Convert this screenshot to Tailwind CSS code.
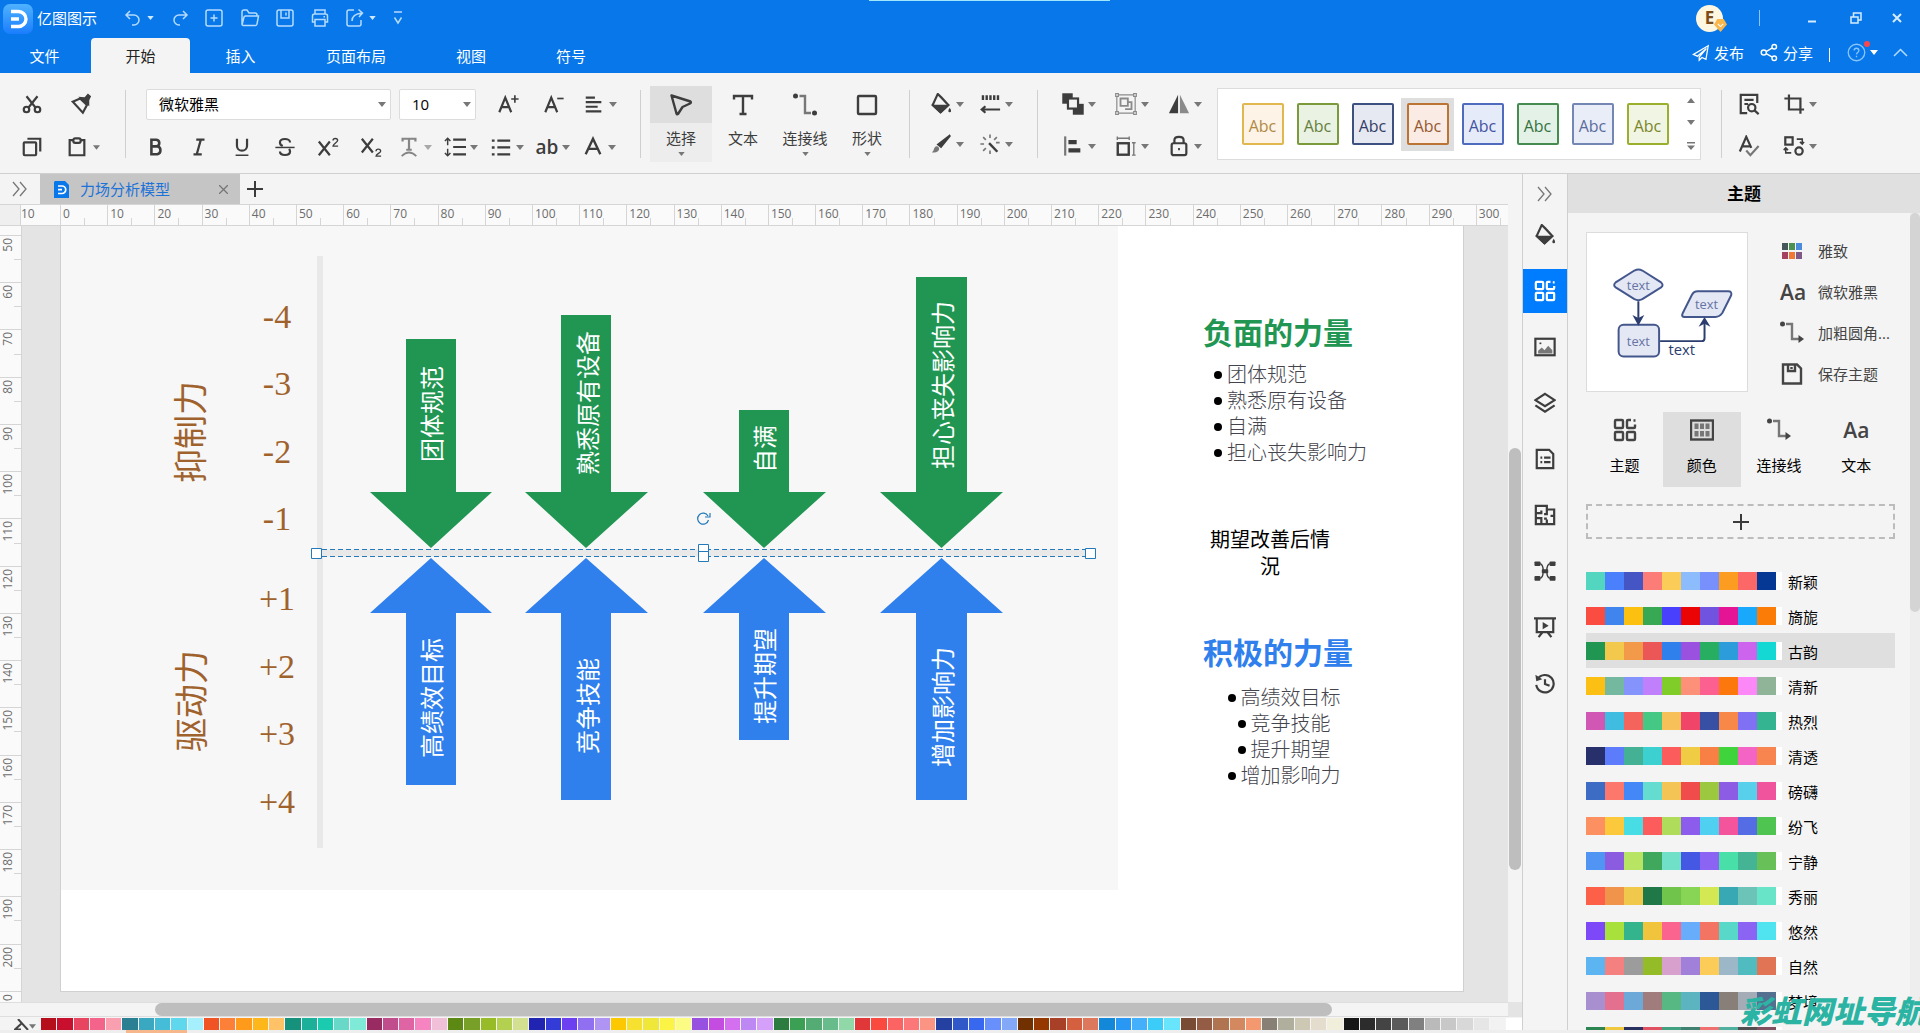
<!DOCTYPE html>
<html lang="zh-CN">
<head>
<meta charset="utf-8">
<title>亿图图示</title>
<script src="https://cdn.jsdelivr.net/npm/@tailwindcss/browser@4"></script>
</head>
<body class="h-screen overflow-hidden flex flex-col bg-[#f4f4f4] text-[15px] leading-5 text-[#222] font-['Open_Sans','Noto_Sans_CJK_SC',sans-serif]">

<svg class="hidden" aria-hidden="true">
  <defs>
    <symbol id="caret" viewBox="0 0 8 5"><path d="M0 0h8L4 5z" fill="currentColor"/></symbol>
    <symbol id="caret-up" viewBox="0 0 8 5"><path d="M0 5h8L4 0z" fill="currentColor"/></symbol>
    <symbol id="chevrons" viewBox="0 0 18 18"><path d="M2 2l6 7-6 7M9 2l6 7-6 7" fill="none" stroke="#777" stroke-width="1.3"/></symbol>
    <symbol id="plus" viewBox="0 0 18 18"><path d="M9 1v16M1 9h16" fill="none" stroke="#3b3b3b" stroke-width="2"/></symbol>
    <!-- title bar -->
    <symbol id="undo" viewBox="0 0 20 20"><path d="M7 3L3 7l4 4M3 7h8a5 5 0 0 1 0 10H9" /></symbol>
    <symbol id="redo" viewBox="0 0 20 20"><path d="M13 3l4 4-4 4M17 7H9a5 5 0 0 0 0 10h1" /></symbol>
    <symbol id="new" viewBox="0 0 20 20"><rect x="2" y="2" width="16" height="16" rx="2"/><path d="M10 6.500v7M6.500 10h7"/></symbol>
    <symbol id="open" viewBox="0 0 20 20"><path d="M2 16V4q0-2 2-2h3l2 3h6q2 0 2 2v1M2 17L4 9q.3-1 1.300-1H18.500L17 16q-.2 1.500-1.500 1.500H3q-1 0-1-1z"/></symbol>
    <symbol id="save" viewBox="0 0 20 20"><rect x="2" y="2" width="16" height="16" rx="2"/><path d="M6 2v8h8V2M11 4.500v3"/></symbol>
    <symbol id="print" viewBox="0 0 20 20"><path d="M5 6V2h10v4M5 14H2.500V8q0-2 2-2h11q2 0 2 2v6H15M5 11.500h10V18H5zM13.500 8.700h1.500"/></symbol>
    <symbol id="export" viewBox="0 0 20 20"><path d="M9 2H4Q2 2 2 4v12q0 2 2 2h10q2 0 2-2v-4M7 13q0-7 10-8M13.500 1.500L17.500 5l-3.500 4"/></symbol>
    <symbol id="plane" viewBox="0 0 20 20"><path d="M18 2L1.500 11.500l4.500 2L16 5 8 14.500V18l3-3 4.500 2z"/></symbol>
    <symbol id="share" viewBox="0 0 20 20"><circle cx="4" cy="10" r="2.700"/><circle cx="15" cy="4" r="2.400"/><circle cx="15" cy="16" r="2.400"/><path d="M6.500 9L13 5.200M6.500 11.300L13 14.800"/></symbol>
    <!-- clipboard -->
    <symbol id="cut" viewBox="0 0 24 24"><circle cx="6" cy="18" r="3"/><circle cx="18" cy="18" r="3"/><path d="M6 3.500l9.800 12.300M18 3.500L8.200 15.800"/></symbol>
    <symbol id="brush" viewBox="0 0 24 24"><path d="M3 9.500L11 6l7.500 7L14 21.500z"/><path d="M9 4l12 10.500V8L23 3.500 19.500.5 16 4.500z" fill="currentColor" stroke="none"/></symbol>
    <symbol id="copy" viewBox="0 0 24 24"><rect x="3" y="7" width="13.500" height="14" rx="1"/><path d="M7 3h14v14" /></symbol>
    <symbol id="paste" viewBox="0 0 24 24"><path d="M8 4.500H4V21h16V4.500h-4"/><rect x="8" y="2.500" width="8" height="5" rx="2"/></symbol>
    <!-- text formatting -->
    <symbol id="fontup" viewBox="0 0 24 24"><path d="M2.500 21L9 5l6.500 16M5 15.500h8"/><path d="M19.500 2.500v8M15.500 6.500h8" stroke-width="1.800"/></symbol>
    <symbol id="fontdown" viewBox="0 0 24 24"><path d="M2.500 21L9 5l6.500 16M5 15.500h8"/><path d="M15.500 6h7" stroke-width="1.800"/></symbol>
    <symbol id="alignl" viewBox="0 0 24 24"><path d="M3 5h10M3 10h17M3 15h13M3 20h17"/></symbol>
    <symbol id="bold" viewBox="0 0 24 24"><path d="M7 4v16h6.500a4.500 4.500 0 0 0 0-8.700H7h5.500a3.700 3.700 0 0 0 0-7.300z" stroke-width="2.800"/></symbol>
    <symbol id="italic" viewBox="0 0 24 24"><path d="M9 4h9M6 20h9M14 4l-4.500 16"/></symbol>
    <symbol id="underline" viewBox="0 0 24 24"><path d="M6.500 3v7.500a5.500 5.500 0 0 0 11 0V3"/><path d="M5 21h14" stroke-width="1.600"/></symbol>
    <symbol id="strike" viewBox="0 0 24 24"><path d="M17.500 7c0-5-11-5-11 0 0 2 1 3 3 4M6.500 17c0 5 11 5 11 0 0-1-.3-2-1-3"/><path d="M1.500 12.500h21" stroke-width="1.600"/></symbol>
    <symbol id="sup" viewBox="0 0 24 24"><path d="M2 6l12 15M14 6L2 21"/><path d="M17.500 5c0-3 5-3 5 0 0 2-5 3.500-5 6H23" stroke-width="1.500"/></symbol>
    <symbol id="sub" viewBox="0 0 24 24"><path d="M2 3l12 15M14 3L2 18"/><path d="M17.500 16.500c0-3 5-3 5 0 0 2-5 3-5 5.500H23" stroke-width="1.500"/></symbol>
    <symbol id="textpath" viewBox="0 0 24 24"><path d="M5 6V3h14v3M12 3v12M9 15h6" /><path d="M4 22q8-8 16 0" stroke-width="1.800"/></symbol>
    <symbol id="linesp" viewBox="0 0 24 24"><path d="M10 4h14M10 12h14M10 20h14"/><path d="M4 10V3M1 5.500l3-3 3 3M4 14v7M1 18.500l3 3 3-3" stroke-width="1.600"/></symbol>
    <symbol id="bullets" viewBox="0 0 24 24"><path d="M8 5h14M8 12.500h14M8 20h14"/><path d="M2 5h3M2 12.500h3M2 20h3" stroke-width="2.600"/></symbol>
    <symbol id="fontcolor" viewBox="0 0 24 24"><path d="M4 20L12 3l8 17M7 14h10" stroke-width="2.600"/></symbol>
    <!-- tools -->
    <symbol id="pointer" viewBox="0 0 24 24"><path d="M2.500 2.500L21.500 8.500q1 1-.5 2l-7.500 3.500-4.500 7q-1 1-1.500-.5z" stroke-linejoin="round"/></symbol>
    <symbol id="text" viewBox="0 0 24 24"><path d="M3 6.500V3h18v3.500M12 3v18M8.500 21h7" /></symbol>
    <symbol id="connector" viewBox="0 0 24 24"><circle cx="2.500" cy="3" r="2.500" fill="currentColor" stroke="none"/><path d="M6.500 3H12v17h6" stroke="#777"/><circle cx="21.500" cy="20" r="2.500" fill="currentColor" stroke="none"/></symbol>
    <symbol id="connarrow" viewBox="0 0 24 24"><circle cx="2.500" cy="3" r="2.500" fill="#444" stroke="none"/><path d="M6 3h6v15h7" stroke="#777"/><path d="M18.500 14l5.500 4-5.500 4z" fill="#444" stroke="none"/></symbol>
    <symbol id="square" viewBox="0 0 24 24"><rect x="3" y="3" width="18" height="18" rx="1" stroke-width="2.400"/></symbol>
    <symbol id="fill" viewBox="0 0 24 24"><path d="M8.500 1L12 4.500l8 8.500-8.500 8L3 13z" stroke-linejoin="round"/><path d="M4 14h15l-7.500 7z" fill="currentColor"/><path d="M21.500 16q3 4.500 0 5-3-.5 0-5z" fill="currentColor" stroke="none"/></symbol>
    <symbol id="linestyle" viewBox="0 0 24 24"><path d="M3 5h20" stroke-width="5" stroke-dasharray="2.600 1.500"/><path d="M3 18h20M7 14.500L3 18l4 3.500"/></symbol>
    <symbol id="pen" viewBox="0 0 24 24"><path d="M22 2.500L12 15l-3-2.500z" fill="currentColor"/><path d="M8 14.500q3.500 2 1 5Q6 22 2 21q2-1 2.500-4 1-3 3.500-2.500z" fill="#777" stroke="none"/></symbol>
    <symbol id="sparkle" viewBox="0 0 24 24"><path d="M12 1.500v4M12 19v4M1.500 12h4M18.500 10.500h4M4.500 4.500l3 3M19.500 4.500l-3 3M4.500 19.500l3-3" stroke="#777" stroke-width="1.800"/><path d="M11 11l9 9.500" stroke-width="2.600"/></symbol>
    <symbol id="front" viewBox="0 0 24 24"><rect x="1.500" y="1.500" width="9" height="9" fill="currentColor"/><rect x="13" y="13" width="9.500" height="9.500" fill="currentColor"/><rect x="6.500" y="6" width="11" height="11" fill="#f4f4f4"/></symbol>
    <symbol id="group" viewBox="0 0 24 24"><g stroke="#8a8a8a"><path d="M2 2h20v20H2z" stroke-width="1.300"/><path d="M6 6h8v8H6zM11 17.500h7V10h-3" stroke-width="2"/><g fill="#f4f4f4" stroke-width="1.200"><path d="M.7.7h3v3h-3zM20.300.7h3v3h-3zM.7 20.300h3v3h-3zM20.300 20.300h3v3h-3z"/></g></g></symbol>
    <symbol id="flip" viewBox="0 0 24 24"><path d="M11 2v20H1z" fill="currentColor" stroke="none"/><path d="M13 2v20h10z" fill="#8a8a8a" stroke="none"/></symbol>
    <symbol id="align" viewBox="0 0 24 24"><path d="M3.500 1.500v21" stroke="#777"/><path d="M7 5.500h9V10H7zM7 14.500h13V19H7z" fill="currentColor" stroke="none"/></symbol>
    <symbol id="size" viewBox="0 0 24 24"><rect x="3" y="9" width="12" height="12.500" stroke-width="2.600"/><path d="M2.500 1.500v4M15.500 1.500v4M2.500 3.500h13M18.500 8.500h4M18.500 22h4M20.500 8.500V22" stroke="#777" stroke-width="1.500"/></symbol>
    <symbol id="lock" viewBox="0 0 24 24"><rect x="4" y="9" width="16" height="13" rx="2"/><path d="M7 9V5.500Q7 2 12 2t5 3.500V9M11 15.500h2"/></symbol>
    <symbol id="find" viewBox="0 0 24 24"><path d="M10 22H3V2h18v9M7 7.500h10M7 12h4"/><circle cx="15" cy="16" r="4"/><path d="M18 19l4.500 4"/></symbol>
    <symbol id="crop" viewBox="0 0 24 24"><path d="M6.500 1.500V18H17M1.500 6H19v16.500M17 18h6"/></symbol>
    <symbol id="spell" viewBox="0 0 24 24"><path d="M2 18L9 2l5.500 12M4.500 12.500h9"/><path d="M9 17l4.500 5L22.500 12" stroke="#777"/></symbol>
    <symbol id="swap" viewBox="0 0 24 24"><rect x="2.500" y="2.500" width="8" height="8"/><circle cx="17.500" cy="17.500" r="4"/><path d="M15 4.500h6V9M18.500 7.500l2.500 2.500 2-2.500M9 19.500H3V15M.8 16.500L3 14l2.500 2.500" stroke-width="1.700"/></symbol>
    <!-- side rail -->
    <symbol id="theme" viewBox="0 0 24 24"><rect x="2" y="2" width="8" height="8" rx="1"/><rect x="2" y="14" width="8" height="8" rx="1"/><rect x="14" y="14" width="8" height="8" rx="1"/><path d="M18 2h-3q-1 0-1 1v6q0 1 1 1h6q1 0 1-1V6.500M20.500 2.500h2"/></symbol>
    <symbol id="image" viewBox="0 0 24 24"><rect x="1.500" y="3" width="21" height="18"/><path d="M4.500 19v-3l4-3.500 3 3 4-5 4.500 5V19z" fill="#777" stroke="none"/><path d="M6 8h2" stroke-width="1.800"/></symbol>
    <symbol id="layers" viewBox="0 0 24 24"><path d="M12 2l10.500 6.800L12 15.500 1.500 8.800zM1.500 14.500L12 21.500l10.500-7"/></symbol>
    <symbol id="doc" viewBox="0 0 24 24"><path d="M3 2h13.500L21 6.500V22H3z"/><path d="M7 10.500h2M11 10.500h7M7 15.500h2M11 15.500h7"/></symbol>
    <symbol id="puzzle" viewBox="0 0 24 24"><path d="M14 6V2H2v20h20V6h-8M2 10h6V7M2 15.500h6v6M14 22v-5M14 6v5h-3M14 16h-3M22 13h-4"/></symbol>
    <symbol id="mind" viewBox="0 0 24 24"><path d="M6 4q4 0 4 8t-4 8M18 4q-4 0-4 8t4 8" stroke-width="1.500"/><g fill="currentColor" stroke="none"><rect x=".5" y="1.500" width="6.500" height="5" rx="1"/><rect x="17" y="1.500" width="6.500" height="5" rx="1"/><rect x=".5" y="17.500" width="6.500" height="5" rx="1"/><rect x="17" y="17.500" width="6.500" height="5" rx="1"/><rect x="8.500" y="10" width="7" height="4.500" rx="1"/></g></symbol>
    <symbol id="board" viewBox="0 0 24 24"><path d="M0 2.500h24M3 2.500V17.500h18V2.500M9 18l-4 5M15 18l4 5"/><path d="M9.500 6.500l6.500 4-6.500 4z" fill="currentColor" stroke="none"/></symbol>
    <symbol id="history" viewBox="0 0 24 24"><path d="M4 7.500a9.500 9.500 0 1 1-1.500 6.500M12 8v5l5 2"/><path d="M1.500 3l1 7 6.500-2z" fill="currentColor" stroke="none"/></symbol>
    <symbol id="colors" viewBox="0 0 24 24"><rect x="1" y="2.500" width="22" height="19"/><path d="M4.500 5.500h4v5.500h-4zM10 5.500h4v5.500h-4zM15.500 5.500h4v5.500h-4zM4.500 13h4v5.500h-4zM10 13h4v5.500h-4zM15.500 13h4v5.500h-4z" fill="#777" stroke="none"/></symbol>
    <symbol id="disk" viewBox="0 0 24 24"><path d="M3 2.500h14L21 6.500V21.500H3z"/><path d="M8 2.500v6.500h7V2.500M11.500 5v2" /></symbol>
  </defs>
</svg>

<!-- Title bar and menu -->
<header class="relative flex h-[73px] shrink-0 flex-col bg-[#0877ea] text-white">
  <div class="absolute left-1/2 top-0 h-px w-[241px] -translate-x-[91px] bg-[#9fe6ff]"></div>
  <div class="flex h-9 items-center pl-[3px]">
    <svg class="mt-px size-[30px]" viewBox="0 0 30 30"><defs><linearGradient id="lg" x1="0" y1="0" x2="0" y2="1"><stop offset="0" stop-color="#4fb2ff"/><stop offset="1" stop-color="#1a7dff"/></linearGradient></defs><rect width="30" height="30" rx="7" fill="url(#lg)"/><path d="M8 7.500h7.500a7.500 7.500 0 0 1 0 15H8M8 15h8" fill="none" stroke="#fff" stroke-width="3.400"/></svg>
    <span class="ml-1">亿图图示</span>
    <div class="ml-[26px] flex items-center fill-none stroke-[#b4dcff] stroke-[1.5] text-[#cfe9ff]">
      <button aria-label="撤销" class="flex w-[47px] items-center gap-1"><svg class="size-5"><use href="#undo"/></svg><svg class="h-[4px] w-[7px] stroke-none"><use href="#caret"/></svg></button>
      <button aria-label="重做" class="w-[34px]"><svg class="size-5"><use href="#redo"/></svg></button>
      <button aria-label="新建" class="w-9"><svg class="size-5"><use href="#new"/></svg></button>
      <button aria-label="打开" class="w-[35px]"><svg class="size-5"><use href="#open"/></svg></button>
      <button aria-label="保存" class="w-[35px]"><svg class="size-5"><use href="#save"/></svg></button>
      <button aria-label="打印" class="w-[35px]"><svg class="size-5"><use href="#print"/></svg></button>
      <button aria-label="导出" class="flex w-[48px] items-center gap-1"><svg class="size-5"><use href="#export"/></svg><svg class="h-[4px] w-[7px] stroke-none"><use href="#caret"/></svg></button>
      <button aria-label="自定义"><svg class="h-4 w-[10px]" viewBox="0 0 10 16"><path d="M1 2h8M1.500 7.500L5 13l3.500-5.500"/></svg></button>
    </div>
    <div class="ml-auto flex items-center">
      <button aria-label="账户" class="relative grid size-[27px] place-items-center rounded-full bg-[#fdf6e0] text-[17px] font-bold text-[#7a4a1a]">E<svg class="absolute -right-1 bottom-0 size-[13px]" viewBox="0 0 12 12"><path d="M3 0h6l3 5-6 7-6-7z" fill="#f8b64c"/><path d="M3.500 4.500L6 7l2.500-2.500" fill="none" stroke="#fff"/></svg></button>
      <span class="ml-9 h-4 w-px bg-[#8cc4ff]"></span>
      <button aria-label="最小化" class="ml-12 w-[42px]"><svg class="h-4 w-2" viewBox="0 0 8 16"><path d="M0 11.500h8" stroke="#d5ecff" stroke-width="2"/></svg></button>
      <button aria-label="还原" class="w-[42px]"><svg class="size-3" viewBox="0 0 12 12" fill="none" stroke="#d5ecff" stroke-width="1.500"><path d="M1 5h7v6H1zM3.500 5V1H11v7H8"/></svg></button>
      <button aria-label="关闭" class="mr-[18px]"><svg class="size-[10px]" viewBox="0 0 10 10" stroke="#d5ecff" stroke-width="2"><path d="M1 1l8 8M9 1L1 9"/></svg></button>
    </div>
  </div>
  <nav class="flex flex-1 pt-0.5">
    <a href="#file" class="grid w-[91px] place-items-center pr-0.5">文件</a>
    <a href="#home" class="grid w-[99px] place-items-center rounded-t-sm bg-[#f4f4f4] text-[#222]">开始</a>
    <a href="#insert" class="grid w-[101px] place-items-center">插入</a>
    <a href="#layout" class="grid w-[130px] place-items-center">页面布局</a>
    <a href="#view" class="grid w-[100px] place-items-center">视图</a>
    <a href="#symbol" class="grid w-[100px] place-items-center">符号</a>
    <div class="mb-1.5 ml-auto mr-3 flex items-center">
      <button class="flex items-center gap-1"><svg class="size-[18px] fill-none stroke-white stroke-[1.4]"><use href="#plane" width="18" height="18"/></svg>发布</button>
      <button class="ml-4 flex items-center gap-1"><svg class="size-[19px] fill-none stroke-white stroke-[1.5]"><use href="#share" width="19" height="19"/></svg>分享</button>
      <span class="ml-4 mt-1 h-[14px] w-px bg-white"></span>
      <button aria-label="帮助" class="relative ml-[17px] flex items-center gap-1"><svg class="size-[19px] fill-none stroke-[#86c5ff] stroke-[1.4]" viewBox="0 0 20 20"><circle cx="10" cy="10" r="8.700"/><path d="M7.500 8q0-2.500 2.500-2.500T12.500 8q0 1.200-1.200 2T10 12M10 13.500v1.500"/></svg><svg class="h-[5px] w-[8px]"><use href="#caret"/></svg><span class="absolute left-[17px] -top-0.5 size-[6px] rounded-full bg-[#f8474d]"></span></button>
      <button aria-label="折叠" class="ml-[15px]"><svg class="h-[9px] w-[15px] fill-none stroke-[#b4dcff] stroke-[1.5]" viewBox="0 0 15 9"><path d="M1 8l6.500-6.500L14 8"/></svg></button>
    </div>
  </nav>
</header>

<!-- Ribbon -->
<section class="flex h-[101px] shrink-0 items-start border-b border-[#cfcfcf] pl-[10px] pt-[15px] text-[#3d3d3d]">
  <div class="grid w-[115px] grid-cols-[44px_71px] gap-y-[11px] fill-none stroke-current stroke-[2.4]">
    <button aria-label="剪切" class="grid h-8 place-items-center"><svg class="size-[22px]"><use href="#cut"/></svg></button>
    <button aria-label="格式刷" class="flex h-8 items-center pl-4"><svg class="size-[22px]"><use href="#brush"/></svg></button>
    <button aria-label="复制" class="grid h-8 place-items-center"><svg class="size-[22px]"><use href="#copy"/></svg></button>
    <button aria-label="粘贴" class="flex h-8 items-center gap-[5px] pl-3"><svg class="size-[22px]"><use href="#paste"/></svg><svg class="h-[5px] w-[7px] stroke-none text-[#777]"><use href="#caret"/></svg></button>
  </div>
  <div class="mt-0.5 h-[68px] w-px bg-[#cfcfcf]"></div>
  <div class="ml-2 w-[489px] space-y-[11px]">
    <div class="flex h-8 items-center pl-3">
      <div class="relative h-[31px] w-[245px]">
        <select aria-label="字体" class="h-full w-full appearance-none rounded-xs border border-[#dcdcdc] bg-white pl-3 text-[15px] text-black"><option>微软雅黑</option></select>
        <svg class="pointer-events-none absolute right-[5px] top-[13px] h-[5px] w-[8px] text-[#777]"><use href="#caret"/></svg>
      </div>
      <div class="relative ml-2 h-[31px] w-[77px]">
        <select aria-label="字号" class="h-full w-full appearance-none rounded-xs border border-[#dcdcdc] bg-white pl-3 text-[15px] text-black"><option>10</option></select>
        <svg class="pointer-events-none absolute right-[5px] top-[13px] h-[5px] w-[8px] text-[#777]"><use href="#caret"/></svg>
      </div>
      <div id="fontRow1" class="ml-[9px] flex"></div>
    </div>
    <div id="fontRow2" class="flex h-8 items-center"></div>
  </div>
  <div class="ml-[17px] mt-0.5 h-[68px] w-px bg-[#cfcfcf]"></div>
  <div class="-mt-0.5 ml-[9px] flex text-[15px]">
    <button class="flex h-[76px] w-[62px] flex-col items-center bg-[#ededed]"><span class="grid h-[37px] w-full place-items-center bg-[#dedede]"><svg class="size-6 fill-none stroke-current stroke-[2.4]"><use href="#pointer"/></svg></span><span class="mt-[5px]">选择</span><svg class="mt-1 h-[4px] w-[7px] text-[#777]"><use href="#caret"/></svg></button>
    <button class="flex h-[76px] w-[62px] flex-col items-center"><span class="grid h-[37px] place-items-center"><svg class="size-6 fill-none stroke-current stroke-[2.4]"><use href="#text"/></svg></span><span class="mt-[5px]">文本</span></button>
    <button class="flex h-[76px] w-[62px] flex-col items-center"><span class="grid h-[37px] place-items-center"><svg class="size-6 fill-none stroke-current stroke-[2.4]"><use href="#connector"/></svg></span><span class="mt-[5px]">连接线</span><svg class="mt-1 h-[4px] w-[7px] text-[#777]"><use href="#caret"/></svg></button>
    <button class="flex h-[76px] w-[62px] flex-col items-center"><span class="grid h-[37px] place-items-center"><svg class="size-6 fill-none stroke-current stroke-[2.4]"><use href="#square"/></svg></span><span class="mt-[5px]">形状</span><svg class="mt-1 h-[4px] w-[7px] text-[#777]"><use href="#caret"/></svg></button>
  </div>
  <div class="ml-[11px] mt-0.5 h-[68px] w-px bg-[#cfcfcf]"></div>
  <div id="styleGroup" class="ml-3 grid grid-cols-[49px_49px] gap-y-2"></div>
  <div class="ml-[17px] mt-0.5 h-[68px] w-px bg-[#cfcfcf]"></div>
  <div id="arrangeGroup" class="ml-[14px] grid grid-cols-[53px_53px_53px] gap-y-[10px]"></div>
  <div class="ml-1.5 flex h-[72px] w-[484px] items-center border border-[#dcdcdc] bg-white pl-[18px]">
    <div id="gallery" class="flex gap-0.5"></div>
    <div class="ml-auto mr-[5px] flex h-full flex-col items-center justify-between py-[9px] text-[#777]">
      <svg class="h-[5px] w-[8px]"><use href="#caret-up"/></svg><svg class="h-[5px] w-[8px]"><use href="#caret"/></svg>
      <svg class="h-[8px] w-[8px]" viewBox="0 0 8 8"><path d="M0 0h8v1.500H0zM0 3.500h8L4 8z" fill="currentColor"/></svg>
    </div>
  </div>
  <div class="ml-5 mt-0.5 h-[68px] w-px bg-[#cfcfcf]"></div>
  <div id="editGroup" class="ml-0.5 grid grid-cols-[50px_52px] gap-y-[10px]"></div>
</section>

<!-- Workspace -->
<div class="flex min-h-0 flex-1">
  <main class="flex min-w-0 flex-1 flex-col">
    <div class="flex h-[30px] shrink-0 items-stretch">
      <button aria-label="展开" class="w-10 pl-[11px]"><svg class="size-[18px]"><use href="#chevrons"/></svg></button>
      <div class="flex w-[200px] items-center bg-[#c5c5c5] pl-[14px] pr-3 text-[#1d72d8]">
        <svg class="h-[17px] w-[15px]" viewBox="0 0 15 17"><path d="M1 0h10l4 4v13H0V1z" fill="#0877ea"/><path d="M4 5h4a3.500 3.500 0 0 1 0 7.500H4M4 8.700h4" fill="none" stroke="#fff" stroke-width="1.700"/></svg>
        <span class="ml-[11px]">力场分析模型</span>
        <button aria-label="关闭标签" class="ml-auto"><svg class="size-[9px]" viewBox="0 0 9 9" stroke="#777" stroke-width="1.300"><path d="M0 0l9 9M9 0L0 9"/></svg></button>
      </div>
      <button aria-label="新建标签" class="pl-1.5"><svg class="size-[18px]"><use href="#plus"/></svg></button>
    </div>
    <div class="flex min-h-0 flex-1">
      <div class="flex min-w-0 flex-1 flex-col">
        <!-- horizontal ruler -->
        <div class="flex h-[22px] shrink-0 overflow-hidden border-y border-[#d5d5d5] bg-[#fafafa] text-[12px] leading-[17px] text-[#6d6d6d]">
          <div class="w-[21px] shrink-0 border-r border-[#d5d5d5] bg-[#efefef]"></div>
          <div class="w-[39px] shrink-0">10</div>
          <div id="rulerX" class="grid w-[1463px] shrink-0 grid-cols-31"></div>
        </div>
        <div class="flex min-h-0 flex-1">
          <!-- vertical ruler -->
          <div class="w-[22px] shrink-0 overflow-hidden border-r border-[#d5d5d5] bg-[#fafafa] pt-[9px] text-[12px] leading-[16px] text-[#6d6d6d]">
            <div id="rulerY" class="grid h-[803px] grid-rows-17"></div>
          </div>
          <!-- canvas -->
          <div class="relative min-w-0 flex-1 overflow-hidden bg-[#e4e4e4]">
            <div class="absolute left-[38px] top-0 h-[766px] w-[1404px] border border-t-0 border-[#d0d0d0] bg-white">
              <div class="h-[664px] w-[1057px] bg-[#f7f7f7]"></div>
            </div>
            <svg class="absolute left-0 top-0" width="1120" height="664" viewBox="22 226 1120 664">
              <path d="M320 256v592" stroke="#e9e9e9" stroke-width="6"/>
              <path d="M316 553h774" stroke="#e9e9e9" stroke-width="7"/>
              <g fill="#219653">
                <path d="M406 339h50v153h36l-61 56-61-56h36z"/><path d="M561 315h50v177h37l-62 56-61-56h36z"/>
                <path d="M739 410h50v82h37l-62 56-61-56h36z"/><path d="M916 277h51v215h36l-61.500 56-61.500-56h36z"/>
              </g>
              <g fill="#2f80ed">
                <path d="M406 785h50V613h36l-61-55-61 55h36z"/><path d="M561 800h50V613h37l-62-55-61 55h36z"/>
                <path d="M739 740h50V613h37l-62-55-61 55h36z"/><path d="M916 800h51V613h36l-61.500-55-61.500 55h36z"/>
              </g>
              <g fill="#fff" font-size="24" text-anchor="middle">
                <text transform="translate(441 414) rotate(-90)">团体规范</text><text transform="translate(597 403) rotate(-90)">熟悉原有设备</text>
                <text transform="translate(774 449) rotate(-90)">自满</text><text transform="translate(952 385) rotate(-90)">担心丧失影响力</text>
                <text transform="translate(441 698) rotate(-90)">高绩效目标</text><text transform="translate(597 706) rotate(-90)">竞争技能</text>
                <text transform="translate(774 676) rotate(-90)">提升期望</text><text transform="translate(952 707) rotate(-90)">增加影响力</text>
              </g>
              <g fill="#a0622d" font-size="34" text-anchor="middle">
                <text transform="translate(203 432) rotate(-90)">抑制力</text><text transform="translate(204 701) rotate(-90)">驱动力</text>
                <g font-family="Liberation Serif, serif">
                  <text x="277" y="328">-4</text><text x="277" y="395">-3</text><text x="277" y="463">-2</text><text x="277" y="530">-1</text>
                  <text x="277" y="610">+1</text><text x="277" y="678">+2</text><text x="277" y="745">+3</text><text x="277" y="813">+4</text>
                </g>
              </g>
              <g fill="none" stroke="#2479b8">
                <path d="M322 549.500h763M322 556.500h763" stroke-dasharray="5 3" stroke-width="1.200"/>
                <g fill="#fff"><path d="M311.500 548.500h10v10h-10zM1085.500 548.500h10v10h-10zM698.500 544.500h10v7h-10zM698.500 551.500h10v10h-10z"/></g>
                <path d="M708 516a5.500 5.500 0 1 0 .5 4M705 517h5v-4" stroke-width="1.200"/>
              </g>
            </svg>
            <section class="absolute left-[1181px] top-[87px]">
              <h2 class="text-[30px] font-bold leading-10 text-[#219653]">负面的力量</h2>
              <ul class="mt-[9px] pl-[11px] text-[20px] font-light leading-[26px] text-[#44444c]">
                <li class="flex items-center gap-[5px]"><i class="size-2 rounded-full bg-black"></i>团体规范</li>
                <li class="flex items-center gap-[5px]"><i class="size-2 rounded-full bg-black"></i>熟悉原有设备</li>
                <li class="flex items-center gap-[5px]"><i class="size-2 rounded-full bg-black"></i>自满</li>
                <li class="flex items-center gap-[5px]"><i class="size-2 rounded-full bg-black"></i>担心丧失影响力</li>
              </ul>
            </section>
            <p class="absolute left-[1183px] top-[300px] w-[130px] text-center text-[20px] leading-[27px] text-black">期望改善后情況</p>
            <section class="absolute left-[1181px] top-[407px]">
              <h2 class="text-[30px] font-bold leading-10 text-[#2f80ed]">积极的力量</h2>
              <ul class="mt-3 w-[162px] text-[20px] font-light leading-[26px] text-[#44444c]">
                <li class="flex items-center justify-center gap-[5px]"><i class="size-2 rounded-full bg-black"></i>高绩效目标</li>
                <li class="flex items-center justify-center gap-[5px]"><i class="size-2 rounded-full bg-black"></i>竞争技能</li>
                <li class="flex items-center justify-center gap-[5px]"><i class="size-2 rounded-full bg-black"></i>提升期望</li>
                <li class="flex items-center justify-center gap-[5px]"><i class="size-2 rounded-full bg-black"></i>增加影响力</li>
              </ul>
            </section>
          </div>
        </div>
        <div class="h-[15px] shrink-0 border-y border-[#dedede] pl-[155px]"><div class="h-[13px] w-[87%] rounded-full bg-[#bebebe]"></div></div>
      </div>
      <!-- vertical scrollbar -->
      <div class="flex w-[14px] flex-col pt-[244px]"><div class="mx-px h-[422px] rounded-full bg-[#bebebe]"></div><div class="mt-auto h-[15px] bg-[#e4e4e4]"></div></div>
    </div>
    <!-- palette bar -->
    <div class="flex h-[13px] shrink-0 items-start pt-px">
      <button aria-label="填充颜色" class="flex w-[41px] items-center justify-end pr-[5px] pt-px text-[#777]"><svg class="h-[11px] w-[15px]" viewBox="0 0 15 11"><path d="M4 0l10 11M8 4L1 10.500h6" fill="none" stroke="#444" stroke-width="2"/></svg><svg class="mt-1 h-[5px] w-[7px]"><use href="#caret"/></svg></button>
      <div id="palette" class="flex h-3 flex-1 gap-px"></div>
    </div>
  </main>

  <!-- Side rail -->
  <aside class="flex w-[46px] shrink-0 flex-col items-stretch border-x border-[#cfcfcf] text-[#3d3d3d]">
    <button aria-label="收起" class="grid h-[39px] place-items-center"><svg class="size-[18px]"><use href="#chevrons"/></svg></button>
    <div id="rail" class="flex flex-col gap-3"></div>
  </aside>

  <!-- Theme panel -->
  <aside class="flex w-[352px] shrink-0 flex-col">
    <h2 class="grid h-[39px] shrink-0 place-items-center bg-[#e0e0e0] text-[17px] font-bold text-black">主题</h2>
    <div class="flex min-h-0 flex-1">
      <div class="flex min-w-0 flex-1 flex-col overflow-hidden pl-[18px] pr-[15px] pt-[19px]">
        <div class="flex shrink-0">
          <svg class="h-[160px] w-[162px] shrink-0 border border-[#dcdcdc] bg-white" viewBox="0 0 162 160">
            <g fill="#e4e7f4" stroke="#44578c" stroke-width="2" stroke-linejoin="round">
              <path d="M48 38q4-2 8 0l19 12q3 3 0 5L56 67q-4 2-8 0L29 55q-3-2 0-5z"/>
              <rect x="32" y="93" width="41" height="32" rx="5"/>
              <path d="M112 59h31q4 0 3 4l-9 18q-3 4-7 4H99q-4 0-2-4l9-18q2-4 6-4z"/>
            </g>
            <path d="M52 69v22M74 109.500h42q3 0 3-3V88" fill="none" stroke="#2c3e70" stroke-width="2"/>
            <path d="M46 83l6 3 6-3-6 11zM113 95l6-3 6 3-6-10z" fill="#2c3e70"/>
            <g font-size="13" fill="#6474a4" text-anchor="middle"><text x="52" y="58">text</text><text x="52" y="114">text</text><text x="121" y="77">text</text><text x="96" y="124" font-size="15" fill="#2c3e70">text</text></g>
          </svg>
          <ul class="-mt-0.5 ml-8 flex flex-col whitespace-nowrap text-[#444]">
            <li class="flex h-[41px] items-center gap-[14px]"><svg class="size-6" viewBox="0 0 24 24"><path fill="#46575c" d="M2 4h6v7H2z"/><path fill="#4d9151" d="M9 4h6v7H9z"/><path fill="#4a8cdb" d="M16 4h6v7h-6z"/><path fill="#a44060" d="M2 13h6v7H2z"/><path fill="#f07a35" d="M9 13h6v7H9z"/><path fill="#805a86" d="M16 13h6v7h-6z"/></svg>雅致</li>
            <li class="flex h-[41px] items-center gap-[14px]"><span class="w-6 text-[21px] font-semibold">Aa</span>微软雅黑</li>
            <li class="flex h-[41px] items-center gap-[14px]"><svg class="size-6 fill-none stroke-[2.4]"><use href="#connarrow"/></svg>加粗圆角...</li>
            <li class="flex h-[41px] items-center gap-[14px]"><svg class="size-6 fill-none stroke-[#444] stroke-[2.4]"><use href="#disk"/></svg>保存主题</li>
          </ul>
        </div>
        <div class="mt-[18px] grid shrink-0 grid-cols-4 text-black">
          <button class="flex h-[75px] flex-col items-center pt-1.5"><svg class="size-6 fill-none stroke-[#444] stroke-[2.4]"><use href="#theme"/></svg><span class="mt-[13px]">主题</span></button>
          <button class="flex h-[75px] flex-col items-center bg-[#dedede] pt-1.5"><svg class="size-6 fill-none stroke-[#444] stroke-[2.4]"><use href="#colors"/></svg><span class="mt-[13px]">颜色</span></button>
          <button class="flex h-[75px] flex-col items-center pt-1.5"><svg class="size-6 fill-none stroke-[2.4]"><use href="#connarrow"/></svg><span class="mt-[13px]">连接线</span></button>
          <button class="flex h-[75px] flex-col items-center pt-1.5"><span class="h-6 text-[21px] font-semibold leading-6 text-[#444]">Aa</span><span class="mt-[13px]">文本</span></button>
        </div>
        <button aria-label="新建颜色" class="mt-[17px] grid h-[35px] shrink-0 place-items-center border-2 border-dashed border-[#bcbcbc]"><svg class="size-[18px]"><use href="#plus"/></svg></button>
        <ul id="themes" class="mt-6 text-black"></ul>
      </div>
      <div class="w-[10px] bg-[#eee]"><div class="h-[399px] rounded-full bg-[#d4d4d4]"></div></div>
    </div>
  </aside>
</div>
<div class="h-[3px] shrink-0 bg-[#eee] pl-[126px]"><div class="h-full w-[61px] bg-[#f6b78d]"></div></div>
<div class="absolute bottom-0.5 right-0 w-[184px] overflow-hidden whitespace-nowrap pl-1 text-[31px] font-black italic leading-10 text-[#2bb3a3]">彩虹网址导航</div>

<script>
const $ = id => document.getElementById(id);
const caret = '<svg class="h-[5px] w-[8px] stroke-none text-[#777]"><use href="#caret"/></svg>';
const icon = id => `<svg class="size-[22px] fill-none stroke-current stroke-[2.4]"><use href="#${id}"/></svg>`;
const tool = (id, label, arrow, width) => `<button aria-label="${label}" class="${width} flex h-8 items-center justify-center gap-1">${id === 'ab' ? '<span class="text-[19px] font-semibold leading-6">ab</span>' : icon(id)}${arrow ? caret : ''}</button>`;
const fill = (id, list) => { $(id).innerHTML = list.map(t => tool(t[0], t[1], t[2], t[3])).join(''); };

fill('fontRow1', [['fontup','增大字号',0,'w-[46px]'],['fontdown','减小字号',0,'w-[46px]'],['alignl','对齐',1,'w-[46px]']]);
fill('fontRow2', [['bold','加粗',0,'w-[43px]'],['italic','斜体',0,'w-[43px]'],['underline','下划线',0,'w-[43px]'],['strike','删除线',0,'w-[43px]'],['sup','上标',0,'w-[43px]'],['sub','下标',0,'w-[43px]'],['textpath','文字路径',1,'w-[46px] opacity-60'],['linesp','行距',1,'w-[46px]'],['bullets','项目符号',1,'w-[46px]'],['ab','大小写',1,'w-[46px]'],['fontcolor','字体颜色',1,'w-[46px]']]);
fill('styleGroup', [['fill','填充',1,'w-full'],['linestyle','线条',1,'w-full'],['pen','画笔',1,'w-full'],['sparkle','效果',1,'w-full']]);
fill('arrangeGroup', [['front','置顶',1,'w-full'],['group','组合',1,'w-full'],['flip','翻转',1,'w-full'],['align','对齐形状',1,'w-full'],['size','大小',1,'w-full'],['lock','锁定',1,'w-full']]);
fill('editGroup', [['find','查找',0,'w-full'],['crop','裁剪',1,'w-full'],['spell','拼写检查',0,'w-full'],['swap','替换形状',1,'w-full']]);

$('gallery').innerHTML = [['#e0b84f','#fdf3e6','#b08a45'],['#7a9a3c','#eaf2e4','#64803a'],['#3d5080','#e6e9f1','#333c66'],['#bb7433','#faece5','#96582f'],['#4e6bbd','#e6ebf9','#4153a0'],['#468c50','#e3f1e6','#35713f'],['#7386b4','#e8edf8','#5a6c9c'],['#9caf2d','#f1f5e3','#7a8628']]
  .map((c, i) => `<button class="grid h-[53px] w-[53px] place-items-center ${i === 3 ? 'bg-[#dedede]' : ''}"><span class="grid size-[42px] place-items-center rounded-xs border-2 pt-1 text-[16px]" style="border-color:${c[0]};background:${c[1]};color:${c[2]}">Abc</span></button>`).join('');

$('rail').innerHTML = ['fill','theme','image','layers','doc','puzzle','mind','board','history']
  .map(id => `<button aria-label="${id}" class="grid h-11 place-items-center ${id === 'theme' ? 'bg-[#007cff] text-white' : ''}">${icon(id)}</button>`).join('');

$('rulerX').innerHTML = Array.from({length: 31}, (_, i) => `<div class="relative border-l border-[#d5d5d5] pl-0.5">${i * 10}<i class="absolute bottom-0 left-1/2 h-[7px] w-px bg-[#d5d5d5]"></i></div>`).join('');
$('rulerY').innerHTML = Array.from({length: 17}, (_, i) => `<div class="relative border-t border-[#d5d5d5] pt-0.5"><span class="block rotate-180 [writing-mode:vertical-rl]">${i === 16 ? 0 : 50 + i * 10}</span><i class="absolute right-0 top-1/2 h-px w-[7px] bg-[#d5d5d5]"></i></div>`).join('');

$('palette').innerHTML = ('b50f1c c8102e e84560 f4648a f99fb0 2a7f93 3aa8c0 45bcd8 5fd8ee a5f0fc f15424 fc8038 ff9a1a fdb71a ffc266 16917c 1cb09a 1bcbb0 68d8c8 80ead8 982c62 c04e8c df64a4 f584c0 f0c0d8 5c8814 78a028 98bc28 b4d050 d2e090 2024b0 343cd8 6c40f0 9070f0 b094f4 fcc800 f6e030 f0e838 fcf444 fcfc84 9850e0 c44ce0 d470f0 be88f4 d4a0fa 2c7c40 3ca054 54ac74 68bc8c 90d8a8 e03838 fa4a40 fc6464 fc7878 fc9484 2440a0 3058c8 3868f0 6890fc 84a8f8 703000 943800 a84028 d46040 de785c 1488d8 2898f4 44b0fc 3cccf8 68e4fc 784c34 945c44 b07450 d48860 f49870 888074 b0ae9c ccc8b4 e4dccc f2eedc 161616 2c2c2c 444444 5a5a5a 808080 bababa c8c8c8 d8d8d8 e6e6e6 f2f2f2 ffffff')
  .split(' ').map(c => `<i class="flex-1" style="background:#${c}"></i>`).join('');

$('themes').innerHTML = [
  ['新颖','52d6c0 4a80fc 4555c4 fc7c78 fccc58 8cbcfc 7890fc fc9c20 fc6868 043894'],
  ['旖旎','fa4c40 4084ee fcc010 38a854 4840fc ea0404 7054e0 e41494 18a8fc fc7c08'],
  ['古韵','219653 f2c94c f2994a eb5757 2f80ed 9b51e0 27ae60 2d9cdb cc64ee 14d8d4'],
  ['清新','fcc014 74b8a0 8494fc c080fc 80cc28 fc9078 fc6090 fc780c fc88f8 90b498'],
  ['热烈','d058b4 40bce0 f4645c 44c884 f8c058 f04468 3850a4 f88848 8070f4 34b490'],
  ['清透','28306c 5c7cfc 44b094 3cd0d0 fc5c5c f0cc44 f88044 40d43c f464c4 f88450'],
  ['磅礴','3c6cc4 fc786c 4488f8 64dcd0 f4c454 f04c4c 9cc840 8c5ce4 58d0ec f0549c'],
  ['纷飞','fc9060 fcc83c 48dce4 fc5c5c b0dc5c 8c5cec 50d0f0 f4549c 546ce4 50c450'],
  ['宁静','5094f4 8c5ce0 b8e464 40a85c 70e0c8 4458e4 8c64f4 48e0a8 44b494 68c058'],
  ['秀丽','fc6048 f0944c f0c84c 207848 70c44c 88d454 d4e854 38a8b4 6cc4b8 68e4c8'],
  ['悠然','7c48f8 a8e03c 34b48c f0c43c fc6490 68acfc f47464 58d8c8 8c64f4 50e4f0'],
  ['自然','5cb4f0 f48080 9c9c9c 94bc28 d8a0cc a080d8 fccc58 9cb8c8 50bcc0 e07454'],
  ['梦境','a890d0 e47090 6ca8d8 a07c7c 58b884 5cb4c0 2c5898 888078 a4acb8 547090'],
  ['','2c8450 f0c840 283060 e05060 40a080 408070 f07070 50b0a0 505050 805060']
].map((r, i) => `<li><button class="flex h-[35px] w-full items-center ${i === 2 ? 'bg-[#dfdfdf]' : ''}"><span class="flex h-[18px] w-[196px] bg-white pr-1.5">${r[1].split(' ').map(c => `<i class="flex-1" style="background:#${c}"></i>`).join('')}</span><span class="ml-1.5 pt-0.5">${r[0]}</span></button></li>`).join('');
</script>
</body>
</html>
